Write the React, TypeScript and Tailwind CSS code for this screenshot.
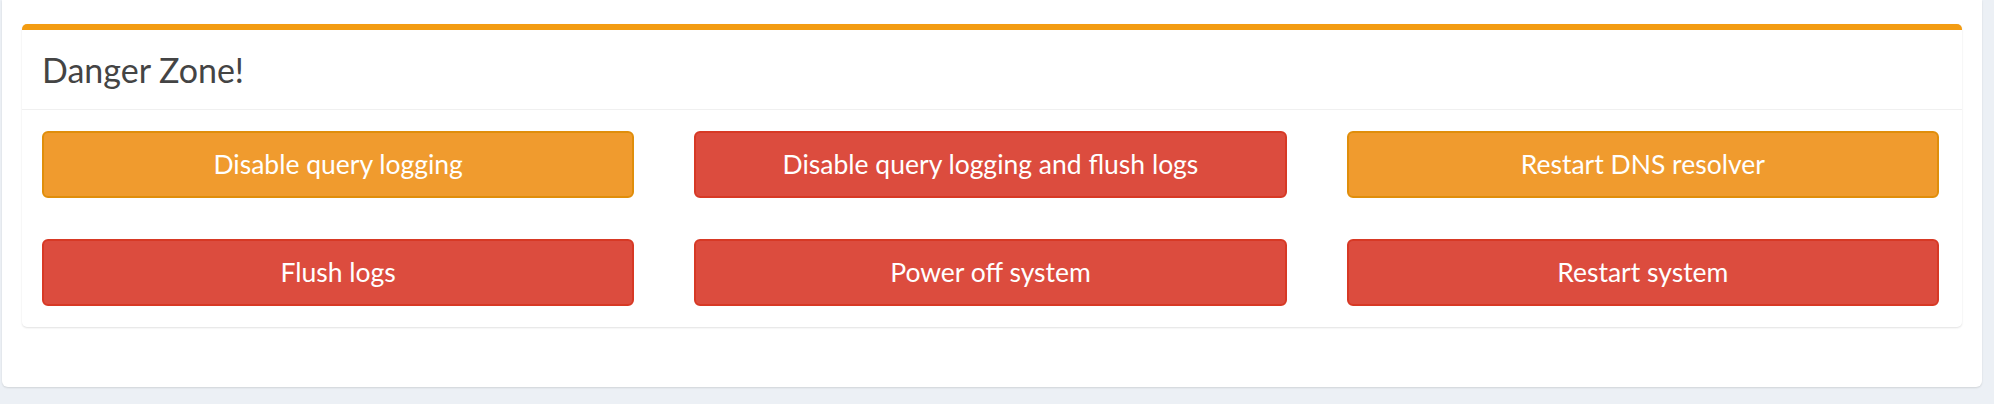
const actions = [
  { label: "Disable query logging", tone: "warning" },
  { label: "Disable query logging and flush logs", tone: "danger" },
  { label: "Restart DNS resolver", tone: "warning" },
  { label: "Flush logs", tone: "danger" },
  { label: "Power off system", tone: "danger" },
  { label: "Restart system", tone: "danger" },
];

function ActionButton({ label, tone }: { label: string; tone: string }) {
  const cls =
    tone === "warning"
      ? "bg-[#f09b2e] border-[#e08e0b]"
      : "bg-[#dc4c3e] border-[#d73925]";
  return (
    <button
      type="button"
      className={`h-[67px] w-full rounded-[6px] border-2 text-white text-[26.5px] ${cls}`}
    >
      {label}
    </button>
  );
}

export default function App() {
  return (
    <div
      className="h-[404px] w-full bg-[#ecf0f5] pl-[2px] pr-[12px]"
      style={{ fontFamily: "Lato, 'Open Sans', sans-serif" }}
    >
      <div className="bg-white rounded-b-[6px] shadow-[0_1px_2px_rgba(0,0,0,0.12)] px-[20px] pt-[24px] pb-[60px]">
        {/* Danger zone box */}
        <div className="bg-white rounded-[5px] border-t-[6px] border-[#f39c12] shadow-[0_1px_2px_rgba(0,0,0,0.12)]">
          <div className="h-[80px] flex items-center pl-[20px] border-b border-[#f0f0f0]">
            <h3 className="text-[34px] text-[#444]">Danger Zone!</h3>
          </div>
          <div className="grid grid-cols-3 gap-x-[60px] gap-y-[41px] pt-[21px] pb-[21px] pl-[20px] pr-[23px]">
            {actions.map((a) => (
              <ActionButton key={a.label} label={a.label} tone={a.tone} />
            ))}
          </div>
        </div>
      </div>
    </div>
  );
}
